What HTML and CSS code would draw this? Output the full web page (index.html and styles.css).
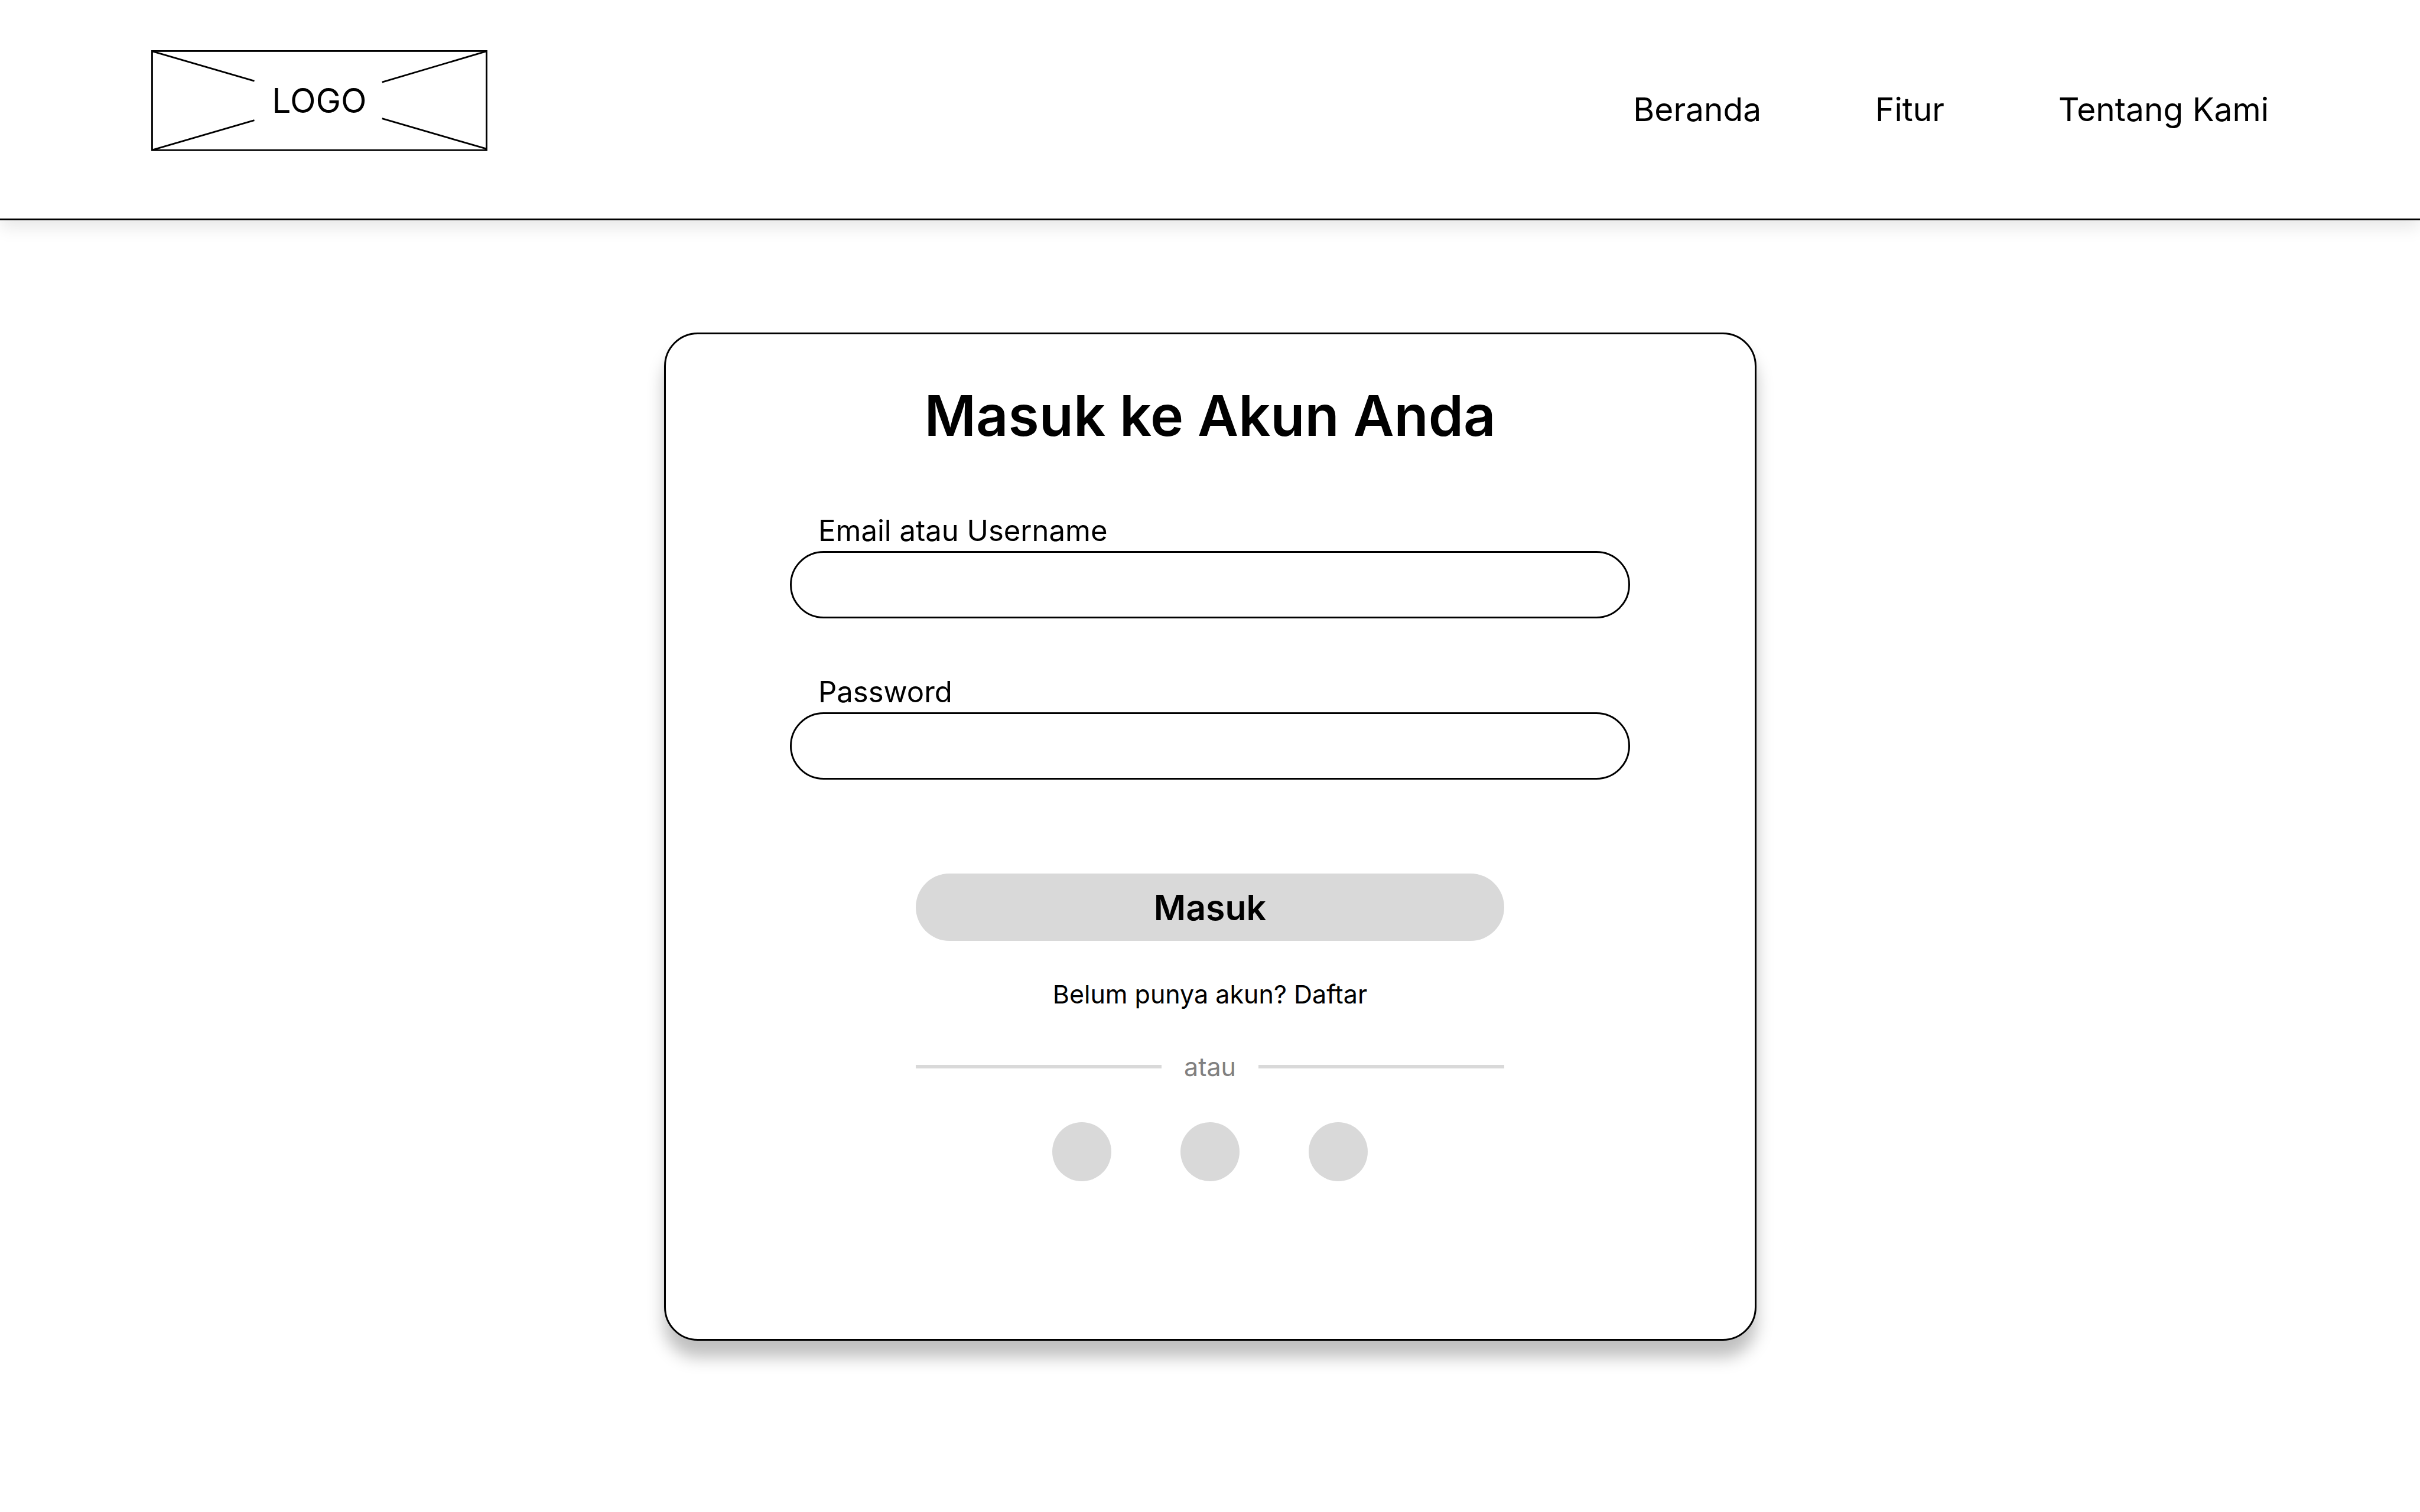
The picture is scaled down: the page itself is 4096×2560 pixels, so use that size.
FILE: index.html
```html
<!DOCTYPE html>
<html lang="id">
<head>
  <meta charset="utf-8">
  <meta name="viewport" content="width=device-width, initial-scale=1">
  <title>Masuk ke Akun Anda</title>
  <link rel="stylesheet" href="styles.css">
</head>
<body>
  <header class="site-header">
    <a class="logo" href="#">
      <svg class="logo-frame" viewBox="0 0 600 180" aria-hidden="true">
        <rect x="1.5" y="1.5" width="597" height="177"/>
        <path d="M2 2 184 55M412 57 598 2M2 178 184 125M412 122 598 176"/>
      </svg>
      <span class="logo-text">LOGO</span>
    </a>
    <nav class="site-nav">
      <a href="#">Beranda</a>
      <a href="#">Fitur</a>
      <a href="#">Tentang Kami</a>
    </nav>
  </header>

  <main class="page">
    <form class="card">
      <h1 class="card-title">Masuk ke Akun Anda</h1>

      <div class="field">
        <label for="identity">Email atau Username</label>
        <input id="identity" type="text" autocomplete="username">
      </div>
      <div class="field">
        <label for="password">Password</label>
        <input id="password" type="password" autocomplete="current-password">
      </div>

      <div class="actions">
        <button class="submit" type="submit">Masuk</button>
        <p class="signup">Belum punya akun? <a href="#">Daftar</a></p>
        <div class="divider">atau</div>
        <div class="socials">
          <button class="social" type="button"></button>
          <button class="social" type="button"></button>
          <button class="social" type="button"></button>
        </div>
      </div>
    </form>
  </main>
</body>
</html>
```
FILE: styles.css
```css
* {
  box-sizing: border-box;
}

body {
  margin: 0;
  background: #fff;
  color: #000;
  font-family: "Inter", "Liberation Sans", sans-serif;
}

a {
  color: inherit;
  text-decoration: none;
}

.site-header {
  display: flex;
  align-items: center;
  justify-content: space-between;
  min-height: 373px;
  padding: 0 256px;
  border-bottom: 3px solid #000;
  box-shadow: 0 11px 28px rgba(0, 0, 0, 0.1);
}

.logo {
  display: grid;
  place-items: center;
  width: 569px;
  margin-bottom: 29px;
}

.logo-frame,
.logo-text {
  grid-area: 1 / 1;
}

.logo-frame {
  display: block;
  width: 100%;
  fill: none;
  stroke: #000;
  stroke-width: 3;
}

.logo-text {
  font-size: 57px;
  line-height: 70px;
}

.site-nav {
  display: flex;
  gap: 193px;
  font-size: 55px;
  line-height: 72px;
}

.page {
  padding: 190px 48px;
}

.card {
  display: flex;
  flex-direction: column;
  align-items: center;
  max-width: 1849px;
  margin: 0 auto;
  padding: 80px 48px 267px;
  border: 3px solid #000;
  border-radius: 57px;
  background: #fff;
  box-shadow: 0 28px 28px rgba(0, 0, 0, 0.25);
}

.card-title {
  margin: 0 0 108px;
  font-size: 95px;
  font-weight: 600;
  line-height: 116px;
}

.field {
  display: flex;
  flex-direction: column;
  gap: 5px;
  width: 100%;
  max-width: 1422px;
}

.field + .field {
  margin-top: 96px;
}

.field label {
  padding-left: 48px;
  font-size: 49px;
  line-height: 58px;
}

.field input {
  width: 100%;
  height: 114px;
  padding: 0 48px;
  border: 3px solid #000;
  border-radius: 57px;
  background: transparent;
  font: inherit;
  font-size: 49px;
}

.actions {
  width: 100%;
  max-width: 996px;
  margin-top: 159px;
  font-size: 43px;
  line-height: 50px;
}

.submit {
  display: block;
  width: 100%;
  height: 114px;
  border: 0;
  border-radius: 57px;
  background: #d9d9d9;
  color: #000;
  font-family: inherit;
  font-size: 59px;
  font-weight: 600;
}

.signup {
  margin: 65px 0 73px;
  text-align: center;
}

.divider {
  display: flex;
  align-items: center;
  gap: 38px;
  color: #808080;
}

.divider::before,
.divider::after {
  content: "";
  flex: 1;
  height: 6px;
  background: #d9d9d9;
}

.socials {
  display: flex;
  justify-content: center;
  gap: 117px;
  margin-top: 69px;
}

.social {
  width: 100px;
  height: 100px;
  padding: 0;
  border: 0;
  border-radius: 50%;
  background: #d9d9d9;
}
```
